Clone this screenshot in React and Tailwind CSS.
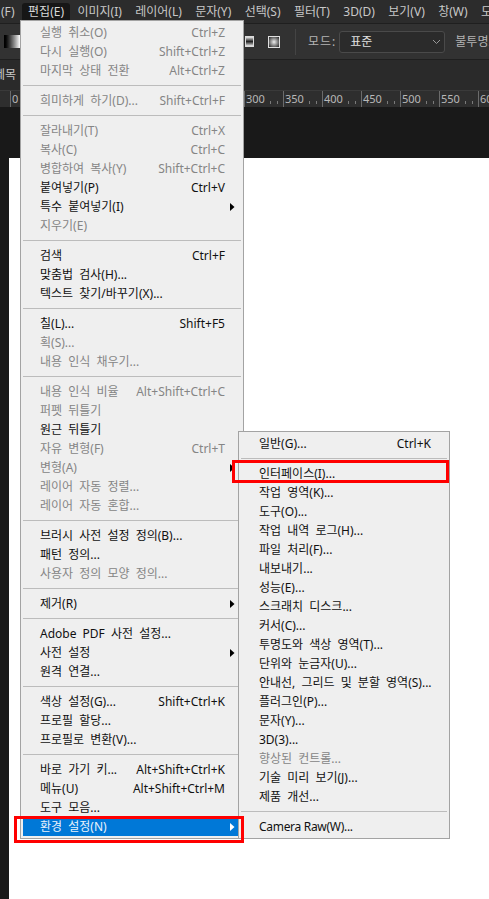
const topMenu = ['(F)', '편집(E)', '이미지(I)', '레이어(L)', '문자(Y)', '선택(S)', '필터(T)', '3D(D)', '보기(V)', '창(W)', '도움말(H)'];

const editMenu = [
  [
    { label: '실행 취소(O)', keys: 'Ctrl+Z', off: true },
    { label: '다시 실행(O)', keys: 'Shift+Ctrl+Z', off: true },
    { label: '마지막 상태 전환', keys: 'Alt+Ctrl+Z', off: true },
  ],
  [{ label: '희미하게 하기(D)...', keys: 'Shift+Ctrl+F', off: true }],
  [
    { label: '잘라내기(T)', keys: 'Ctrl+X', off: true },
    { label: '복사(C)', keys: 'Ctrl+C', off: true },
    { label: '병합하여 복사(Y)', keys: 'Shift+Ctrl+C', off: true },
    { label: '붙여넣기(P)', keys: 'Ctrl+V' },
    { label: '특수 붙여넣기(I)', arrow: true },
    { label: '지우기(E)', off: true },
  ],
  [
    { label: '검색', keys: 'Ctrl+F' },
    { label: '맞춤법 검사(H)...' },
    { label: '텍스트 찾기/바꾸기(X)...' },
  ],
  [
    { label: '칠(L)...', keys: 'Shift+F5' },
    { label: '획(S)...', off: true },
    { label: '내용 인식 채우기...', off: true },
  ],
  [
    { label: '내용 인식 비율', keys: 'Alt+Shift+Ctrl+C', off: true },
    { label: '퍼펫 뒤틀기', off: true },
    { label: '원근 뒤틀기' },
    { label: '자유 변형(F)', keys: 'Ctrl+T', off: true },
    { label: '변형(A)', off: true, arrow: true },
    { label: '레이어 자동 정렬...', off: true },
    { label: '레이어 자동 혼합...', off: true },
  ],
  [
    { label: '브러시 사전 설정 정의(B)...' },
    { label: '패턴 정의...' },
    { label: '사용자 정의 모양 정의...', off: true },
  ],
  [{ label: '제거(R)', arrow: true }],
  [
    { label: 'Adobe PDF 사전 설정...' },
    { label: '사전 설정', arrow: true },
    { label: '원격 연결...' },
  ],
  [
    { label: '색상 설정(G)...', keys: 'Shift+Ctrl+K' },
    { label: '프로필 할당...' },
    { label: '프로필로 변환(V)...' },
  ],
  [
    { label: '바로 가기 키...', keys: 'Alt+Shift+Ctrl+K' },
    { label: '메뉴(U)', keys: 'Alt+Shift+Ctrl+M' },
    { label: '도구 모음...' },
    { label: '환경 설정(N)', arrow: true, active: true },
  ],
];

const prefsMenu = [
  [{ label: '일반(G)...', keys: 'Ctrl+K' }],
  [
    { label: '인터페이스(I)...' },
    { label: '작업 영역(K)...' },
    { label: '도구(O)...' },
    { label: '작업 내역 로그(H)...' },
    { label: '파일 처리(F)...' },
    { label: '내보내기...' },
    { label: '성능(E)...' },
    { label: '스크래치 디스크...' },
    { label: '커서(C)...' },
    { label: '투명도와 색상 영역(T)...' },
    { label: '단위와 눈금자(U)...' },
    { label: '안내선, 그리드 및 분할 영역(S)...' },
    { label: '플러그인(P)...' },
    { label: '문자(Y)...' },
    { label: '3D(3)...' },
    { label: '향상된 컨트롤...', off: true },
    { label: '기술 미리 보기(J)...' },
    { label: '제품 개선...' },
  ],
  [{ label: 'Camera Raw(W)...', tight: true }],
];

const rulerMarks = [0, 50, 100, 150, 200, 250, 300, 350, 400, 450, 500, 550, 600];

function MenuRow({ item, textLeft, keysRight }) {
  let color = 'text-[#111111]';
  if (item.off) color = 'text-[#858585]';
  if (item.active) color = 'text-[#e8f2fb] bg-[#0078d7]';

  return (
    <div className={`relative flex h-[19px] items-center justify-between whitespace-nowrap ${textLeft} ${keysRight} ${color}`}>
      <span className={item.tight ? 'tracking-[-0.3px]' : '[word-spacing:3px]'}>{item.label}</span>
      {item.keys && <span>{item.keys}</span>}
      {item.arrow && (
        <svg width="5" height="8" viewBox="0 0 5 8" className={`absolute right-[6px] top-[6px] ${item.active ? 'fill-white' : 'fill-black'}`}>
          <path d="M0 0L4.5 4L0 8Z" />
        </svg>
      )}
    </div>
  );
}

function Menu({ groups, className, textLeft, keysRight }) {
  return (
    <div className={`absolute border border-[#a3a3a3] bg-[#efefef] px-[2px] py-[2px] text-[12px] leading-[19px] ${className}`}>
      {groups.map((group, i) => (
        <div key={i}>
          {i > 0 && (
            <div className="flex h-[11px] items-center">
              <div className="h-px w-full bg-[#bcbcbc]" />
            </div>
          )}
          {group.map((item) => (
            <MenuRow key={item.label} item={item} textLeft={textLeft} keysRight={keysRight} />
          ))}
        </div>
      ))}
    </div>
  );
}

export default function App() {
  return (
    <div className="relative h-[899px] w-[489px] overflow-hidden bg-[#191919] font-['Noto_Sans','Noto_Sans_CJK_KR',sans-serif] text-[12px]">
      {/* menu bar */}
      <div className="flex h-[24px] items-center gap-[13.4px] overflow-hidden whitespace-nowrap border-b border-[#1f1f1f] bg-[#2c2c2c] pl-[1px] text-[#c8c8c8]">
        {topMenu.map((name) => (
          <span key={name} className={name === '편집(E)' ? '-mx-[6px] rounded-t-[3px] bg-[#161616] px-[6px] text-[#d8d8d8]' : ''}>
            {name}
          </span>
        ))}
      </div>

      {/* options bar */}
      <div className="flex h-[36px] items-center whitespace-nowrap border-b border-[#1f1f1f] bg-[#323232] pl-[4px] text-[#b4b4b4]">
        <div className="h-[13px] w-[16px] shrink-0 bg-gradient-to-r from-black to-white" />
        <div className="ml-[225px] flex h-[11px] w-[9px] shrink-0 flex-col border border-[#dcdcdc] bg-gradient-to-b from-[#eeeeee] via-[#222222] to-[#eeeeee]" />
        <div className="ml-[14px] h-[12px] w-[12px] shrink-0 border border-[#e0e0e0] bg-[radial-gradient(circle,#eeeeee,#222222)]" />
        <div className="ml-[15px] h-[26px] w-px shrink-0 bg-[#444444]" />
        <span className="ml-[12px] shrink-0 tracking-[1px]">모드:</span>
        <div className="ml-[3px] flex h-[22px] w-[106px] shrink-0 items-center justify-between rounded-[3px] border border-[#4a4a4a] bg-[#2b2b2b] pl-[10px] pr-[3px] text-[#e0e0e0]">
          <span>표준</span>
          <svg width="9" height="6" viewBox="0 0 9 6" fill="none" stroke="#9a9a9a" strokeWidth="1">
            <path d="M1 1L4.5 4.5L8 1" />
          </svg>
        </div>
        <span className="ml-[10px] shrink-0">불투명도:</span>
      </div>

      {/* tab row */}
      <div className="flex h-[30px] items-center bg-[#2a2a2a] text-[#c8c8c8]">
        <span className="-ml-[6px] whitespace-nowrap">제목</span>
      </div>

      {/* ruler */}
      <div className="flex h-[17px] overflow-hidden border-t border-[#3a3a3a] bg-[#2e2e2e] pl-[10px] text-[11px] leading-[16px] text-[#b8b8b8]">
        {rulerMarks.map((mark) => (
          <div key={mark} className="flex h-full w-[39px] shrink-0 justify-between border-l border-[#6b6b6b] pl-[1px]">
            <span>{mark}</span>
            <div className="flex items-end gap-[6px] pb-[3px] pr-[5px]">
              <div className="h-[3px] w-px bg-[#7a7a7a]" />
              <div className="h-[3px] w-px bg-[#7a7a7a]" />
            </div>
          </div>
        ))}
      </div>

      {/* document area */}
      <div className="h-[51px] bg-[#191919]" />
      <div className="ml-[9px] h-[741px] bg-white" />

      <Menu groups={editMenu} className="left-[20px] top-[20px] w-[224px]" textLeft="pl-[17px]" keysRight="pr-[16px]" />
      <Menu groups={prefsMenu} className="left-[238px] top-[431px] w-[212px]" textLeft="pl-[18px]" keysRight="pr-[16px]" />

      {/* red callouts */}
      <div className="absolute left-[232px] top-[460px] h-[23px] w-[217px] border-[3px] border-[#ff0000]" />
      <div className="absolute left-[14px] top-[816px] h-[27px] w-[230px] border-[3px] border-[#ff0000]" />
    </div>
  );
}
